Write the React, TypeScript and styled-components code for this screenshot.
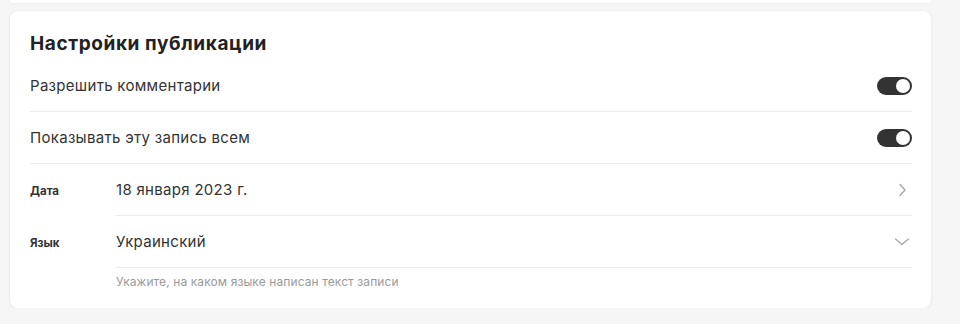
import React from "react";
import styled, { createGlobalStyle } from "styled-components";

const Global = createGlobalStyle`
  html, body { margin: 0; padding: 0; background: #f6f6f6; }
  body { font-family: Inter, "Liberation Sans", Arial, sans-serif; -webkit-font-smoothing: antialiased; }
`;

const Page = styled.div`
  width: 921px;
  padding: 0 29px 0 10px;
  display: flex;
  flex-direction: column;
  gap: 8px;
`;

const PrevCard = styled.div`
  height: 3px;
  background: #fff;
  border-radius: 0 0 8px 8px;
  box-shadow: 0 1px 3px rgba(0,0,0,0.04);
`;

const Card = styled.section`
  background: #fff;
  border-radius: 8px;
  box-shadow: 0 1px 4px rgba(0,0,0,0.05), 0 0 0 1px rgba(0,0,0,0.015);
  padding: 20px 19px 18px 20px;
  display: flex;
  flex-direction: column;
`;

const Title = styled.h2`
  margin: 1px 0 4px;
  font-size: 19px;
  line-height: 24px;
  font-weight: 700;
  letter-spacing: 0.6px;
  color: #222;
`;

const ToggleRow = styled.div`
  height: 51px;
  border-bottom: 1px solid #ececec;
  display: flex;
  align-items: center;
  justify-content: space-between;
  font-size: 15px;
  letter-spacing: 0.3px;
  color: #333;
`;

const Toggle = styled.span<{ $on: boolean }>`
  width: 35px;
  height: 18px;
  border-radius: 9px;
  background: ${p => (p.$on ? "#333" : "#ccc")};
  display: flex;
  align-items: center;
  justify-content: ${p => (p.$on ? "flex-end" : "flex-start")};
  padding: 0 2px;
  box-sizing: border-box;
  &::after {
    content: "";
    width: 14px;
    height: 14px;
    border-radius: 50%;
    background: #fff;
  }
`;

const FieldRow = styled.div`
  display: grid;
  grid-template-columns: 86px 1fr;
  align-items: start;
`;

const FieldLabel = styled.div`
  font-size: 11.5px;
  font-weight: 700;
  color: #333;
  display: flex;
  align-items: center;
  height: 52px;
  padding-top: 2px;
  box-sizing: border-box;
`;

const FieldBody = styled.div`
  display: flex;
  flex-direction: column;
`;

const FieldValue = styled.div`
  height: 51px;
  border-bottom: 1px solid #ececec;
  display: flex;
  align-items: center;
  justify-content: space-between;
  font-size: 15px;
  letter-spacing: 0.3px;
  color: #333;
`;

const Hint = styled.div`
  padding-top: 6px;
  font-size: 12px;
  line-height: 16px;
  letter-spacing: 0.1px;
  color: #9a9a9a;
`;

const Chevron = styled.svg`
  width: 16px;
  height: 16px;
  color: #a8a8a8;
  margin-right: 2px;
`;

const ChevronRight = () => (
  <Chevron viewBox="0 0 16 16" fill="none" stroke="currentColor" strokeWidth="1.4" strokeLinecap="round" strokeLinejoin="round">
    <path d="M6 2.5 L11 8 L6 13.5" />
  </Chevron>
);

const ChevronDown = () => (
  <Chevron viewBox="0 0 16 16" fill="none" stroke="currentColor" strokeWidth="1.4" strokeLinecap="round" strokeLinejoin="round">
    <path d="M1.5 5 L8 10.5 L14.5 5" />
  </Chevron>
);

export default function App() {
  return (
    <>
      <Global />
      <Page>
        <PrevCard />
        <Card>
          <Title>Настройки публикации</Title>
          <ToggleRow>
            Разрешить комментарии
            <Toggle $on />
          </ToggleRow>
          <ToggleRow>
            Показывать эту запись всем
            <Toggle $on />
          </ToggleRow>
          <FieldRow>
            <FieldLabel>Дата</FieldLabel>
            <FieldBody>
              <FieldValue>
                18 января 2023 г.
                <ChevronRight />
              </FieldValue>
            </FieldBody>
          </FieldRow>
          <FieldRow>
            <FieldLabel>Язык</FieldLabel>
            <FieldBody>
              <FieldValue>
                Украинский
                <ChevronDown />
              </FieldValue>
              <Hint>Укажите, на каком языке написан текст записи</Hint>
            </FieldBody>
          </FieldRow>
        </Card>
      </Page>
    </>
  );
}
